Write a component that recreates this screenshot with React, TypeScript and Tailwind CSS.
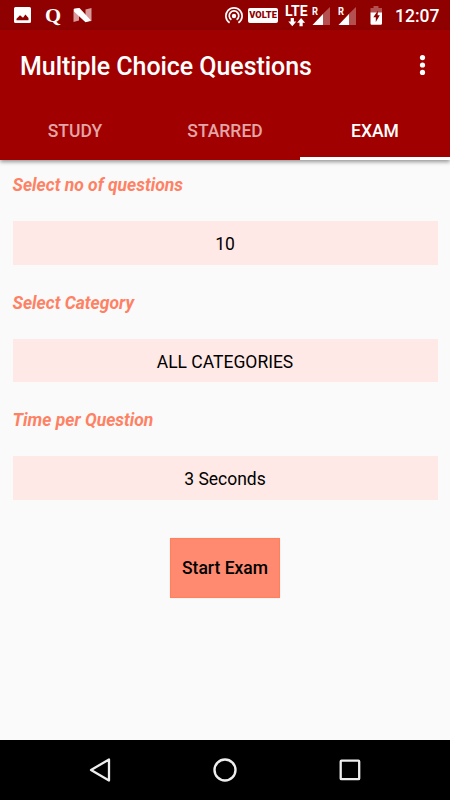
import React from "react";

function ImageIcon() {
  return (
    <svg className="ml-[14px] shrink-0" width="17" height="30" viewBox="0 0 17 30">
      <path fill="#fff" fillRule="evenodd" d="M1.500 7h14a1.500 1.500 0 0 1 1.500 1.500v13a1.500 1.500 0 0 1-1.500 1.500H1.500A1.500 1.500 0 0 1 0 21.500V8.500A1.500 1.500 0 0 1 1.500 7ZM2.500 20.300H14.500V18L11.400 14.600L9 17.800L6 15.200L2.500 18.800Z" />
    </svg>
  );
}

function NougatIcon() {
  return (
    <svg className="ml-[12px] shrink-0" width="19" height="30" viewBox="0 0 19 30">
      <path fill="#d99a9a" d="M0.500 9L6 8V20.500L0.500 22ZM12.500 9.500L18.500 8V21L12.500 22Z" />
      <path fill="#fff" d="M1 8.800L6.500 8L18 20.500L12.500 22.300L1 11.500Z" />
    </svg>
  );
}

function HotspotIcon() {
  return (
    <svg className="ml-[133px] shrink-0" width="18" height="30" viewBox="0 0 18 30" fill="none" stroke="#fff">
      <path strokeWidth="1.700" d="M4.600 22.700A8.100 8.100 0 1 1 13.400 22.700" />
      <path strokeWidth="1.700" d="M6.400 19.800A4.800 4.800 0 1 1 11.600 19.800" />
      <circle cx="9" cy="16" r="2.200" fill="#fff" stroke="none" />
    </svg>
  );
}

function LteArrows() {
  return (
    <svg className="ml-[3px]" width="18" height="9" viewBox="0 0 18 9" fill="#fff">
      <path d="M2.700 0h3.200v3.500h2.400L4.300 8.200 0.300 3.500h2.400zM11.500 8.200h3.200V4.700h2.400L13.100 0 9.100 4.700h2.400z" />
    </svg>
  );
}

function SignalIcon() {
  return (
    <svg className="shrink-0" width="19" height="30" viewBox="0 0 19 30">
      <path fill="#b45050" d="M10.500 14.200L18 7V25H10.500Z" />
      <path fill="#fff" d="M0.500 25L11 14V25Z" />
      <text x="0" y="15" fill="#fff" fontFamily="Roboto, sans-serif" fontWeight="700" fontSize="10.500" textLength="6" lengthAdjust="spacingAndGlyphs">R</text>
    </svg>
  );
}

function BatteryIcon() {
  return (
    <svg className="ml-[13px] shrink-0" width="13" height="30" viewBox="0 0 13 30">
      <path fill="#b45050" d="M3.500 6h5v2H12v5H0.500V8h3z" />
      <path fill="#fff" d="M0.500 12.500H12V23.500a1.200 1.200 0 0 1-1.200 1.200H1.700A1.200 1.200 0 0 1 0.500 23.500Z" />
      <path fill="#900000" d="M8 10.500L3.300 17.200H5.800V22L9.800 15.300H7.600Z" />
    </svg>
  );
}

function StatusBar() {
  return (
    <div className="flex h-[30px] items-center bg-[#8f0000] text-white">
      <ImageIcon />
      <span className="ml-[14px] w-4 origin-left scale-x-115 pt-[1px] font-['Liberation_Serif',serif] text-[18px] leading-[30px] font-bold">Q</span>
      <NougatIcon />
      <HotspotIcon />
      <span className="ml-[5px] flex h-[15px] w-[30px] items-center justify-center rounded-[2px] bg-white text-[9.300px] leading-none font-black text-[#900000]">VOLTE</span>
      <div className="ml-[7px] flex w-[27px] shrink-0 flex-col pt-[2px]">
        <span className="h-[12px] text-[14px] leading-[11px] font-bold">LTE</span>
        <LteArrows />
      </div>
      <SignalIcon />
      <div className="ml-[7px]"><SignalIcon /></div>
      <BatteryIcon />
      <span className="ml-[12px] pt-[1px] text-[17.500px] leading-[30px] font-medium">12:07</span>
    </div>
  );
}

function Tab({ label, active = false }: { label: string; active?: boolean }) {
  return (
    <div className={active
      ? "flex h-[60px] flex-1 items-center justify-center border-b-[3px] border-white pt-[5px] text-white"
      : "flex h-[60px] flex-1 items-center justify-center pt-[2px] text-[#e3a6a6]"}>
      {label}
    </div>
  );
}

function Field({ label, value }: { label: string; value: string }) {
  return (
    <section className="h-[117.500px]">
      <h2 className="h-[46px] text-[17.500px] leading-[20px] font-bold text-[#ff8164] italic">{label}</h2>
      <div className="flex h-[43.500px] items-center justify-center bg-[#ffe9e6] pt-[2.500px] text-[17.500px] text-black">{value}</div>
    </section>
  );
}

export default function App() {
  return (
    <div className="flex h-[800px] w-[450px] flex-col overflow-hidden bg-[#fafafa] font-[Roboto,sans-serif]">
      <StatusBar />
      <header className="h-[130px] bg-[#a10000] shadow-[0_2px_4px_rgba(0,0,0,0.4)]">
        <div className="flex h-[70px] items-center justify-between pr-[24px] pl-[20px]">
          <h1 className="pt-[4px] text-[25px] leading-[30px] font-medium tracking-[-0.060px] text-white">Multiple Choice Questions</h1>
          <svg width="7" height="20" viewBox="0 0 7 20" fill="#fff">
            <circle cx="3.500" cy="2.600" r="2.600" />
            <circle cx="3.500" cy="10" r="2.600" />
            <circle cx="3.500" cy="17.400" r="2.600" />
          </svg>
        </div>
        <nav className="flex text-[17.500px] font-medium">
          <Tab label="STUDY" />
          <Tab label="STARRED" />
          <Tab label="EXAM" active />
        </nav>
      </header>
      <main className="flex-1 px-[12.500px] pt-[15.300px]">
        <Field label="Select no of questions" value="10" />
        <Field label="Select Category" value="ALL CATEGORIES" />
        <Field label="Time per Question" value="3 Seconds" />
        <button className="mx-auto mt-[10px] block h-[60px] w-[110px] border border-[#ff8059] bg-[#ff8a70] pt-[1px] text-[17.500px] font-medium text-black shadow-[0_0_2px_rgba(0,0,0,0.1)]">Start Exam</button>
      </main>
      <footer className="flex h-[60px] items-center bg-black">
        <svg className="ml-[88px]" width="24" height="26" viewBox="0 0 24 26" fill="none" stroke="#eee" strokeWidth="2.300" strokeLinejoin="round">
          <path d="M21 2.500V23.500L3 13Z" />
        </svg>
        <svg className="ml-[101px]" width="24" height="24" viewBox="0 0 24 24" fill="none" stroke="#eee" strokeWidth="2.400">
          <circle cx="12" cy="12" r="10.500" />
        </svg>
        <svg className="ml-[101px]" width="24" height="24" viewBox="0 0 24 24" fill="none" stroke="#eee" strokeWidth="2.300">
          <rect x="2.700" y="2.700" width="18.500" height="18.500" rx="0.800" />
        </svg>
      </footer>
    </div>
  );
}
